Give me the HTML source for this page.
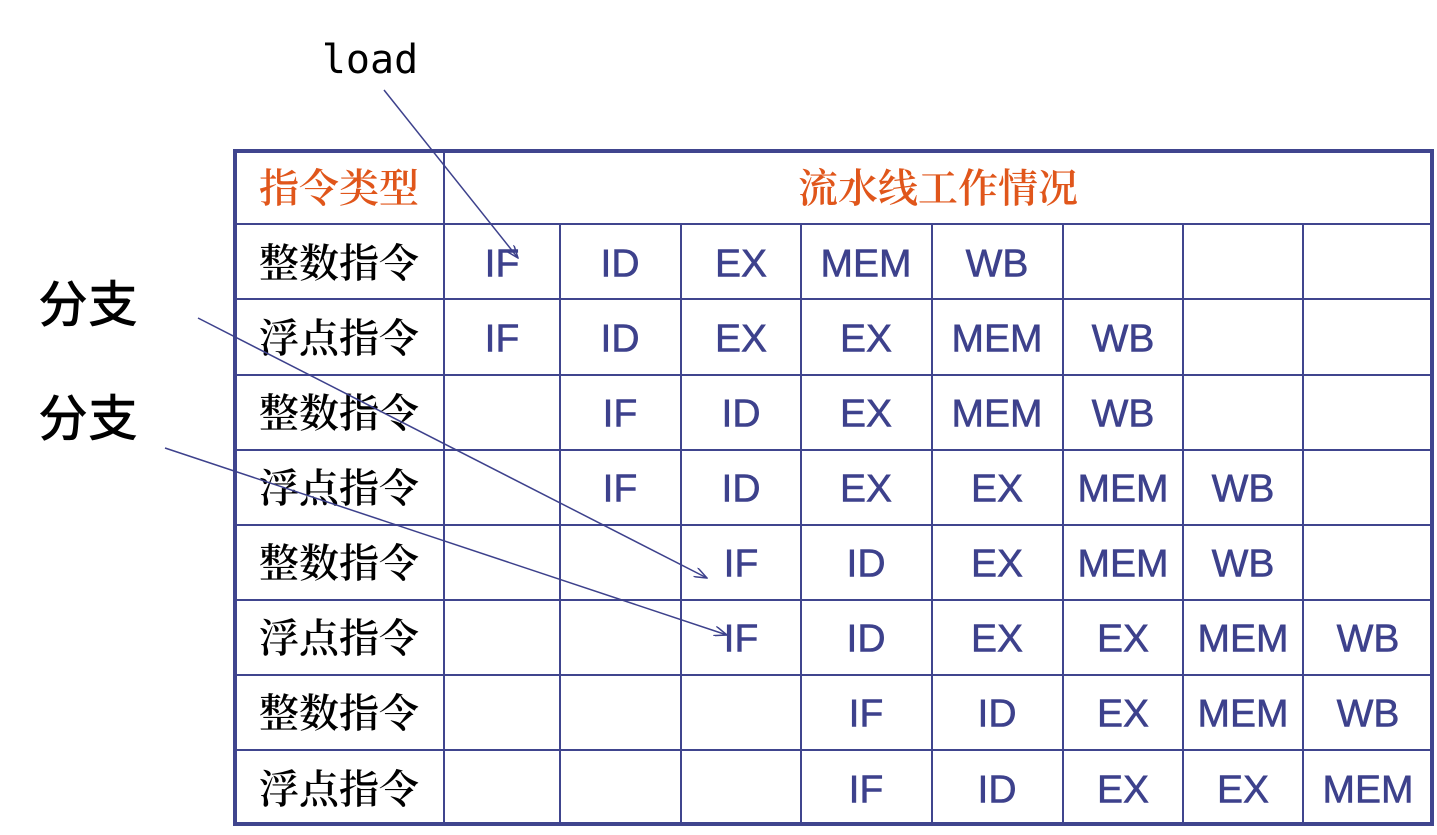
<!DOCTYPE html>
<html><head><meta charset="utf-8"><style>
html,body{margin:0;padding:0;background:#fff;width:1437px;height:835px;overflow:hidden}
svg{display:block}
.c{font-family:"Liberation Sans",sans-serif;fill:#3d418c;stroke:#3d418c;stroke-width:0.6;font-size:39px;text-anchor:middle;dominant-baseline:central}
.z{font-family:"Liberation Sans","Noto Serif CJK SC",serif;font-weight:600;fill:#000;font-size:40px;text-anchor:middle;dominant-baseline:central}
.o{font-family:"Liberation Sans","Noto Serif CJK SC",serif;font-weight:600;fill:#e0561b;font-size:40px;text-anchor:middle;dominant-baseline:central}
</style></head><body>
<svg width="1437" height="835" viewBox="0 0 1437 835">
<defs><marker id="a" markerWidth="14" markerHeight="10" refX="13" refY="5" orient="auto" markerUnits="userSpaceOnUse"><path d="M0,0 L13,5 L0,10" fill="none" stroke="#3d418c" stroke-width="1.5"/></marker></defs>
<g stroke="#40458e" stroke-width="2" fill="none">
<line x1="235" y1="224" x2="1432" y2="224"/>
<line x1="235" y1="299" x2="1432" y2="299"/>
<line x1="235" y1="375" x2="1432" y2="375"/>
<line x1="235" y1="450" x2="1432" y2="450"/>
<line x1="235" y1="525" x2="1432" y2="525"/>
<line x1="235" y1="600" x2="1432" y2="600"/>
<line x1="235" y1="675" x2="1432" y2="675"/>
<line x1="235" y1="750" x2="1432" y2="750"/>
<line x1="444" y1="151" x2="444" y2="824"/>
<line x1="560" y1="224" x2="560" y2="824"/>
<line x1="681" y1="224" x2="681" y2="824"/>
<line x1="801" y1="224" x2="801" y2="824"/>
<line x1="932" y1="224" x2="932" y2="824"/>
<line x1="1063" y1="224" x2="1063" y2="824"/>
<line x1="1183" y1="224" x2="1183" y2="824"/>
<line x1="1303" y1="224" x2="1303" y2="824"/>
<rect x="235" y="151" width="1197" height="673" stroke-width="4"/>
</g>
<text class="o" x="339" y="189">指令类型</text>
<text class="o" x="938" y="189">流水线工作情况</text>
<g>
<text class="z" x="339" y="264">整数指令</text>
<text class="z" x="339" y="339">浮点指令</text>
<text class="z" x="339" y="414">整数指令</text>
<text class="z" x="339" y="489">浮点指令</text>
<text class="z" x="339" y="564">整数指令</text>
<text class="z" x="339" y="639">浮点指令</text>
<text class="z" x="339" y="714">整数指令</text>
<text class="z" x="339" y="790">浮点指令</text>
</g>
<g>
<text class="c" x="502" y="264">IF</text><text class="c" x="620" y="264">ID</text><text class="c" x="741" y="264">EX</text><text class="c" x="866" y="264">MEM</text><text class="c" x="997" y="264">WB</text>
<text class="c" x="502" y="339">IF</text><text class="c" x="620" y="339">ID</text><text class="c" x="741" y="339">EX</text><text class="c" x="866" y="339">EX</text><text class="c" x="997" y="339">MEM</text><text class="c" x="1123" y="339">WB</text>
<text class="c" x="620" y="414">IF</text><text class="c" x="741" y="414">ID</text><text class="c" x="866" y="414">EX</text><text class="c" x="997" y="414">MEM</text><text class="c" x="1123" y="414">WB</text>
<text class="c" x="620" y="489">IF</text><text class="c" x="741" y="489">ID</text><text class="c" x="866" y="489">EX</text><text class="c" x="997" y="489">EX</text><text class="c" x="1123" y="489">MEM</text><text class="c" x="1243" y="489">WB</text>
<text class="c" x="741" y="564">IF</text><text class="c" x="866" y="564">ID</text><text class="c" x="997" y="564">EX</text><text class="c" x="1123" y="564">MEM</text><text class="c" x="1243" y="564">WB</text>
<text class="c" x="741" y="639">IF</text><text class="c" x="866" y="639">ID</text><text class="c" x="997" y="639">EX</text><text class="c" x="1123" y="639">EX</text><text class="c" x="1243" y="639">MEM</text><text class="c" x="1368" y="639">WB</text>
<text class="c" x="866" y="714">IF</text><text class="c" x="997" y="714">ID</text><text class="c" x="1123" y="714">EX</text><text class="c" x="1243" y="714">MEM</text><text class="c" x="1368" y="714">WB</text>
<text class="c" x="866" y="790">IF</text><text class="c" x="997" y="790">ID</text><text class="c" x="1123" y="790">EX</text><text class="c" x="1243" y="790">EX</text><text class="c" x="1368" y="790">MEM</text>
</g>
<text x="370" y="73" font-family="DejaVu Sans Mono,monospace" font-size="40" text-anchor="middle" fill="#000">load</text>
<text x="88" y="322" font-family="Liberation Sans,'Noto Sans CJK SC',sans-serif" font-weight="500" font-size="50" text-anchor="middle" fill="#000">分支</text>
<text x="88" y="436" font-family="Liberation Sans,'Noto Sans CJK SC',sans-serif" font-weight="500" font-size="50" text-anchor="middle" fill="#000">分支</text>
<g stroke="#3d418c" stroke-width="1.5">
<line x1="384" y1="90" x2="518" y2="258" marker-end="url(#a)"/>
<line x1="198" y1="318" x2="707" y2="578" marker-end="url(#a)"/>
<line x1="165" y1="448" x2="727" y2="635" marker-end="url(#a)"/>
</g>
</svg>
</body></html>
